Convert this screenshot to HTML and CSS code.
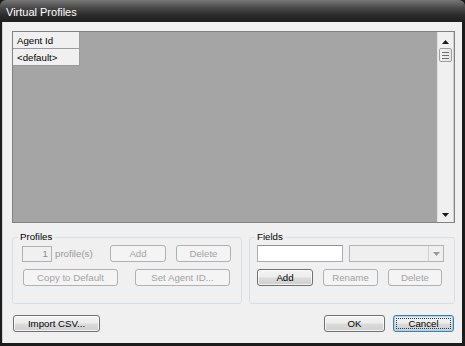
FILE: index.html
```html
<!DOCTYPE html>
<html>
<head>
<meta charset="utf-8">
<link rel="stylesheet" href="styles.css">
</head>
<body>
<div class="window">
  <div class="titlebar">Virtual Profiles</div>
  <div class="client">
    <div class="grid">
      <div class="cells">
        <div class="cell">Agent Id</div>
        <div class="cell">&lt;default&gt;</div>
      </div>
      <div class="vscroll">
        <svg class="arrow up" width="9" height="6" viewBox="0 0 9 6"><path d="M4.5 1 L8 5 L1 5 Z" fill="#1a1a1a"/></svg>
        <div class="thumb"><span></span><span></span><span></span></div>
        <div class="track"></div>
        <svg class="arrow down" width="9" height="6" viewBox="0 0 9 6"><path d="M1 1 L8 1 L4.5 5 Z" fill="#1a1a1a"/></svg>
      </div>
    </div>
    <div class="groups">
      <fieldset class="group profiles">
        <legend>Profiles</legend>
        <div class="row r1">
          <div class="spin">1</div>
          <span class="dim-label">profile(s)</span>
          <button class="btn off w56">Add</button>
          <button class="btn off w55">Delete</button>
        </div>
        <div class="row r2">
          <button class="btn off w95">Copy to Default</button>
          <button class="btn off w95">Set Agent ID...</button>
        </div>
      </fieldset>
      <fieldset class="group fields">
        <legend>Fields</legend>
        <div class="row f1">
          <div class="textbox"></div>
          <div class="combo"><div class="combo-btn"><svg width="7" height="4" viewBox="0 0 7 4"><path d="M0 0 L7 0 L3.5 4 Z" fill="#9a9a9a"/></svg></div></div>
        </div>
        <div class="row f2">
          <button class="btn w56">Add</button>
          <button class="btn off w55">Rename</button>
          <button class="btn off w54">Delete</button>
        </div>
      </fieldset>
    </div>
    <div class="footer">
      <button class="btn import">Import CSV...</button>
      <div class="right">
        <button class="btn w61">OK</button>
        <button class="btn w61 default"><span class="focus">Cancel</span></button>
      </div>
    </div>
  </div>
</div>
</body>
</html>
```
FILE: styles.css
```css
* { box-sizing: border-box; }
html, body { margin: 0; padding: 0; background: #1a1a1a; }
body { font-family: "Liberation Sans", Arial, sans-serif; font-size: 9.7px; color: #000; }

.window {
  width: 465px; height: 346px;
  display: flex; flex-direction: column;
  background: #1c1c1c;
  border-radius: 6px 6px 0 0;
  overflow: hidden;
}
.titlebar {
  height: 22px; flex: none;
  padding: 1px 0 0 6px;
  display: flex; align-items: center;
  color: #fff; font-size: 11px;
  background: linear-gradient(#777 0%, #4a4a4a 35%, #2b2b2b 70%, #1e1e1e 100%);
}
.client {
  flex: 1;
  margin: 0 3px 3px 2px;
  background: #f0f0f0;
  border-left: 1px solid #d0d0d0;
  padding: 9px 7px 0 9px;
  display: flex; flex-direction: column;
}

.grid {
  height: 192px; flex: none;
  border: 1px solid #828282;
  display: flex;
  background: #a5a5a5;
}
.cells { flex: 1; }
.cell {
  width: 67px; height: 17px;
  background: #f0f0f0;
  border-right: 1px solid #9c9c9c;
  border-bottom: 1px solid #9c9c9c;
  padding-left: 4px;
  display: flex; align-items: center;
}
.vscroll {
  width: 17px; flex: none;
  background: #f0f0f0;
  border-left: 1px solid #e2e2e2;
  border-right: 1px solid #cfcfcf;
  display: flex; flex-direction: column; align-items: center;
  padding: 7px 0 4px;
}
.arrow { flex: none; }
.thumb {
  margin-top: 3px;
  width: 13px; height: 14px;
  border: 1px solid #a0a0a0;
  border-radius: 2px;
  background: linear-gradient(90deg, #f4f4f4, #e4e4e4);
  display: flex; flex-direction: column; align-items: center; justify-content: center; gap: 2px;
}
.thumb span { width: 7px; height: 1px; background: #707070; }
.track { flex: 1; }

.groups {
  margin-top: 9px;
  height: 72px; flex: none;
  display: flex; gap: 7px;
}
.group {
  margin: 0; min-width: 0;
  border: 1px solid #d5dfe5;
  border-radius: 3px;
  padding: 2px 0 0 0;
  height: 72px;
}
.group legend {
  padding: 0 2px;
  margin-left: 5px;
  line-height: 10px;
  font-size: 9.7px;
}
.profiles { width: 230px; flex: none; }
.fields { flex: 1; }

.row { display: flex; align-items: center; }
.r1 { padding-left: 9px; height: 17px; margin-top: 1px; }
.r2 { padding-left: 10px; height: 17px; margin-top: 7px; gap: 17px; }
.f1 { padding-left: 7px; height: 17px; gap: 6px; margin-top: 1px; }
.f2 { padding-left: 7px; height: 17px; margin-top: 7px; gap: 10px; }

.spin {
  width: 30px; height: 16px;
  border: 1px solid #adb2b5;
  background: #f0f0f0;
  color: #8a8a8a;
  text-align: right; padding-right: 3px;
  line-height: 14px;
}
.dim-label { color: #9a9a9a; width: 58px; padding-left: 3px; }
.r1 .w55 { margin-left: 10px; }

.textbox {
  width: 86px; height: 17px;
  border: 1px solid #abadb3;
  border-top-color: #8f9399;
  background: #fff;
}
.combo {
  width: 95px; height: 17px;
  border: 1px solid #b4b4b4;
  background: #efefef;
  display: flex; justify-content: flex-end;
}
.combo-btn {
  width: 15px; height: 100%;
  border-left: 1px solid #d0d0d0;
  display: flex; align-items: center; justify-content: center;
}

.btn {
  height: 17px;
  margin: 0; padding: 0;
  font: inherit; color: #000;
  border: 1px solid #707070;
  border-radius: 3px;
  background: linear-gradient(#f4f4f4 0%, #ececec 48%, #dcdcdc 52%, #cfcfcf 100%);
  box-shadow: inset 0 0 0 1px rgba(255,255,255,0.7);
  display: flex; align-items: center; justify-content: center;
}
.btn.off {
  border-color: #adb2b5;
  background: #f4f4f4;
  color: #a3a3a3;
  box-shadow: none;
}
.w54 { width: 54px; } .w55 { width: 55px; } .w56 { width: 56px; }
.w61 { width: 61px; } .w95 { width: 95px; }

.footer {
  margin-top: 11px;
  display: flex; justify-content: space-between;
  padding-left: 1px; padding-right: 1px;
}
.import { width: 87px; }
.right { display: flex; gap: 8px; }
.btn.default {
  border-color: #3c7fb1;
  box-shadow: inset 0 0 0 1px #9fd4f2;
  padding: 2px;
}
.focus {
  width: 100%; height: 100%;
  border: 1px dotted #333;
  display: flex; align-items: center; justify-content: center;
}
```
